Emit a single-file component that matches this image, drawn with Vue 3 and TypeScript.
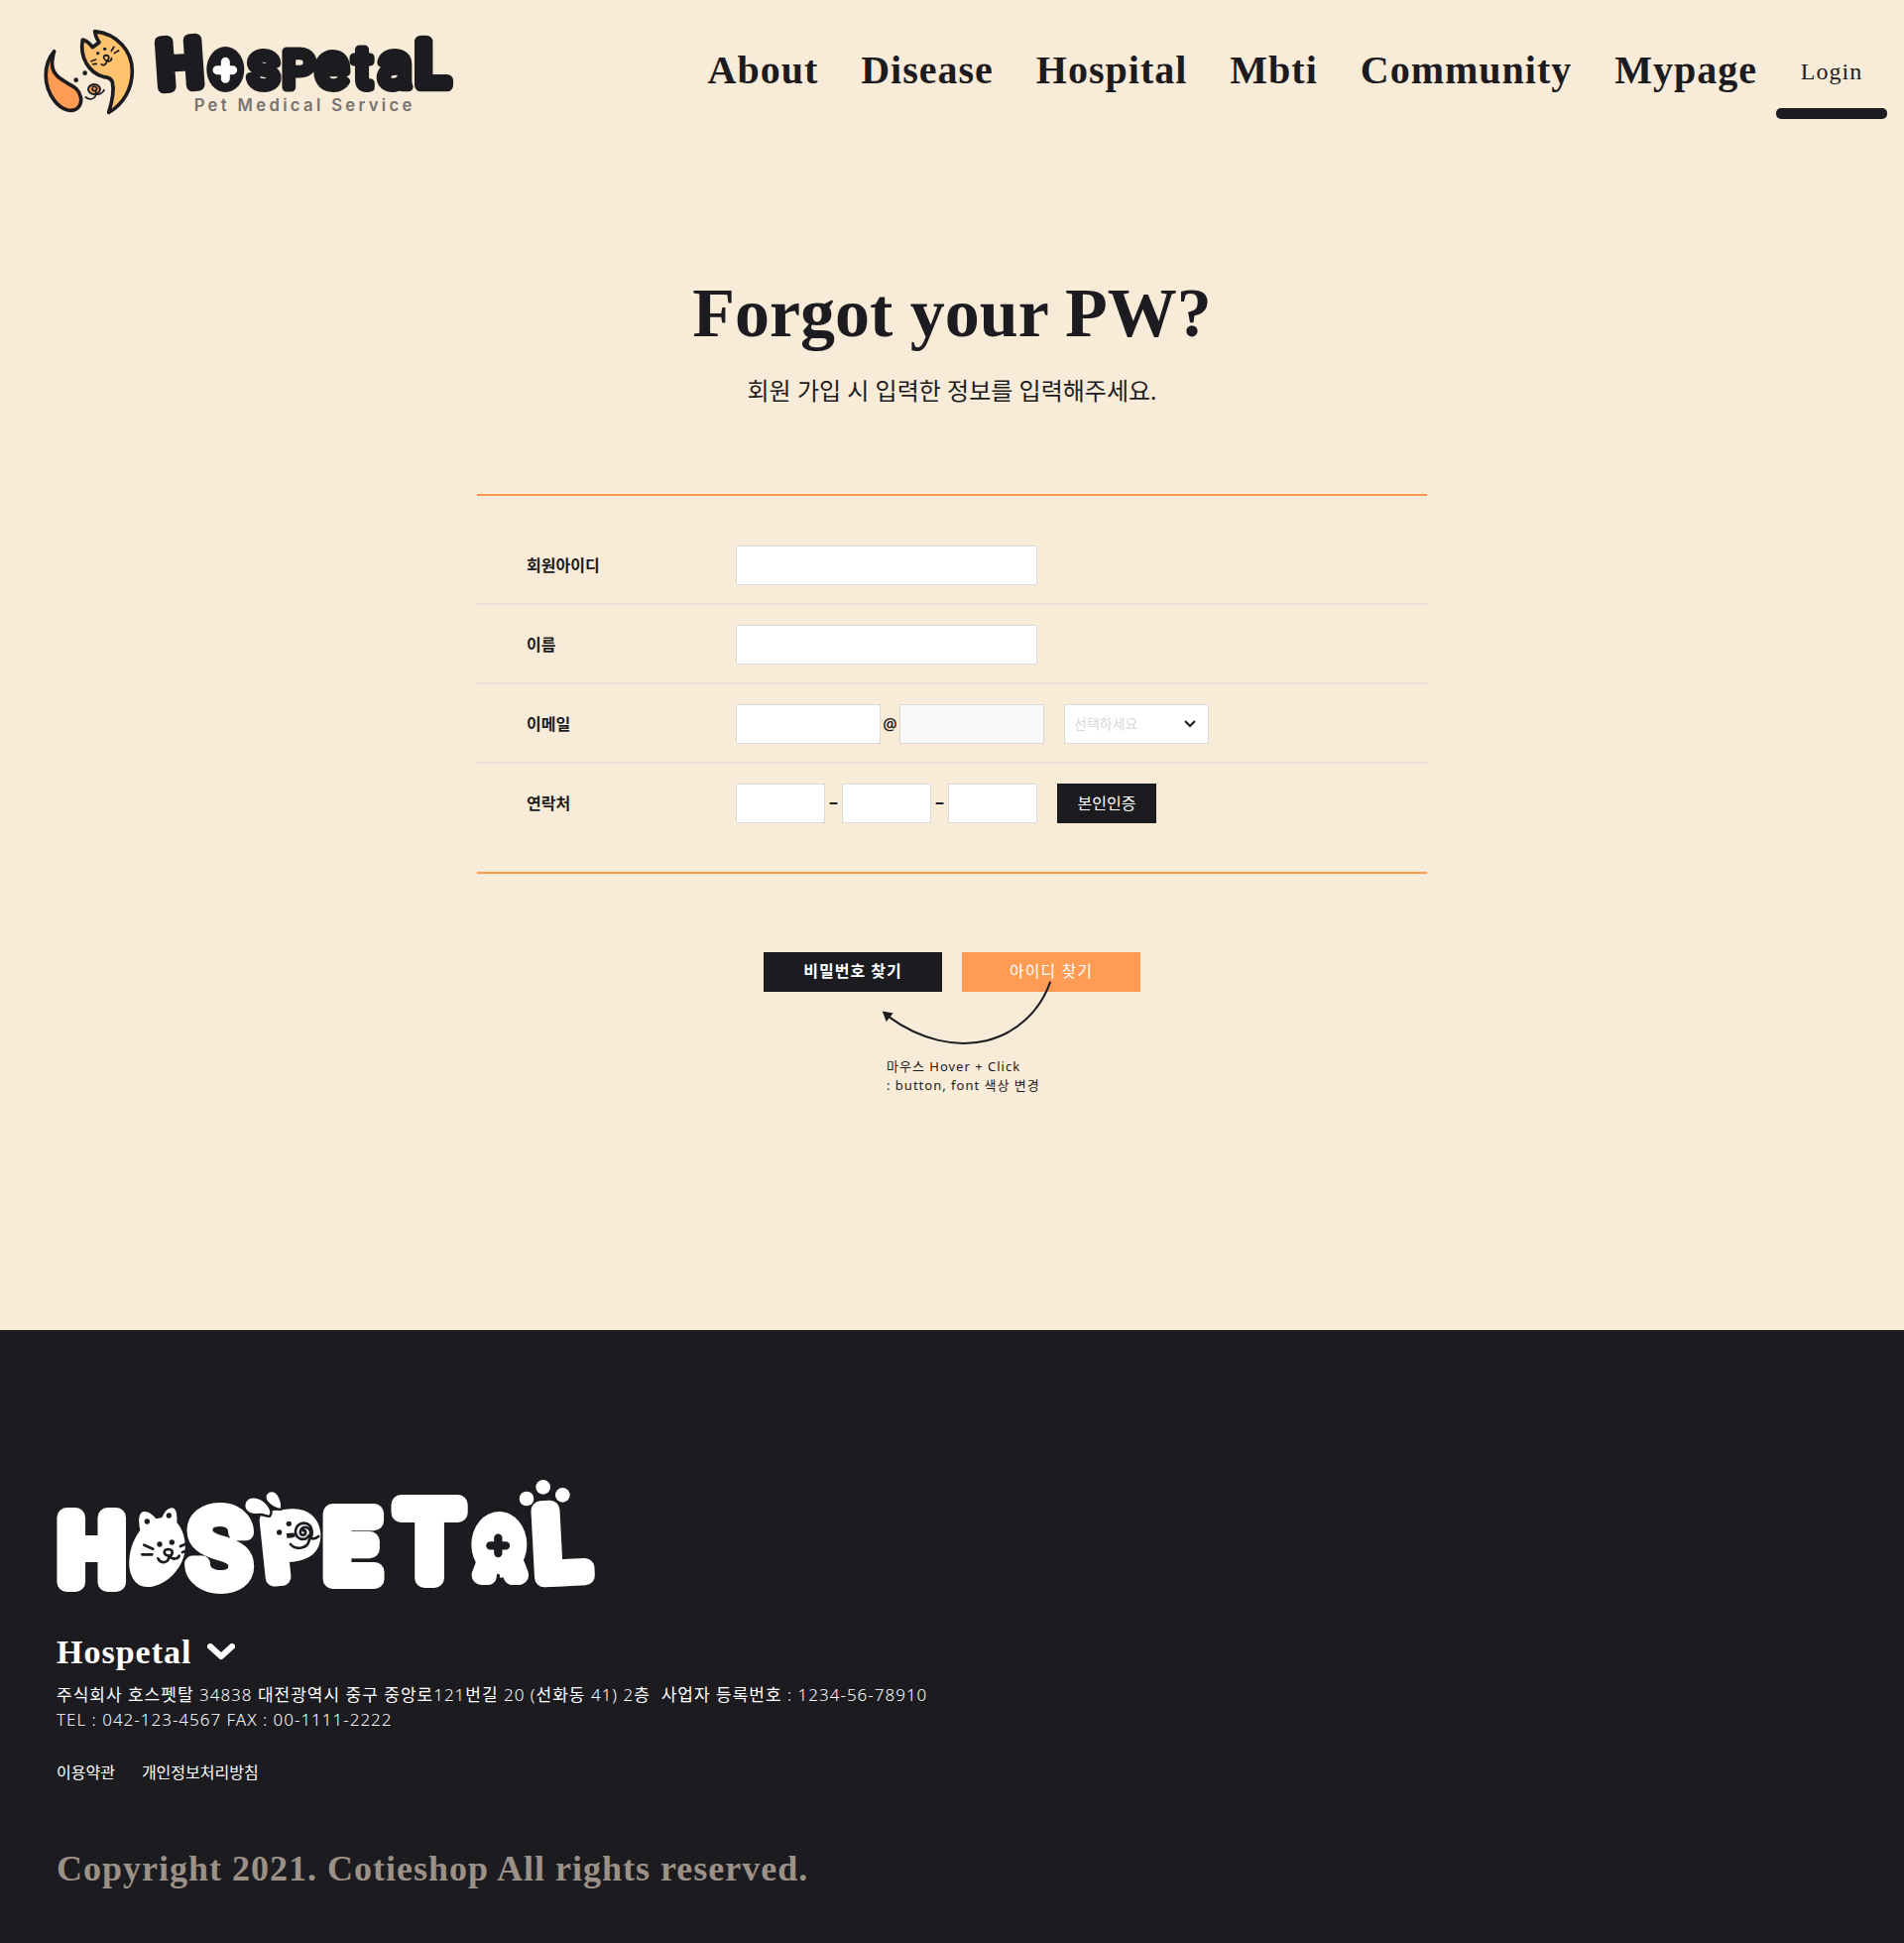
<script setup lang="ts">
import { reactive, ref } from 'vue'

interface NavItem {
  label: string
  href: string
}

const navItems: NavItem[] = [
  { label: 'About', href: '#about' },
  { label: 'Disease', href: '#disease' },
  { label: 'Hospital', href: '#hospital' },
  { label: 'Mbti', href: '#mbti' },
  { label: 'Community', href: '#community' },
  { label: 'Mypage', href: '#mypage' },
]

const form = reactive({
  memberId: '',
  name: '',
  emailUser: '',
  emailDomain: '',
  phone: ['', '', ''],
})

const provider = ref('')
const providers: string[] = ['naver.com', 'gmail.com', 'daum.net']

function pickProvider(): void {
  form.emailDomain = provider.value
}
</script>

<template>
  <div class="page">
    <header class="header">
      <a class="brand" href="#home" aria-label="Hospetal Pet Medical Service">
        <svg class="brand-logo" viewBox="0 0 416 90" aria-hidden="true">
          <!-- cat and dog emblem -->
          <g transform="translate(-10 -8) scale(0.3333)" fill="none" stroke="#1c1b20" stroke-linecap="round" stroke-linejoin="round">
            <path d="M197 35C265 42 310 95 310 155C310 208 283 256 239 280C250 245 255 210 250 188C245 173 232 174 222 172C180 160 150 115 160 60Q176 64 190 83L210 68Q199 53 197 35Z" fill="#ffc370" stroke-width="11" />
            <path d="M74 95C40 135 40 200 75 245C95 272 130 285 149 262C161 244 154 222 140 208C118 188 62 178 68 125Q70 106 74 95Z" fill="#ff9b52" stroke-width="11" />
            <path d="M247 94L255 82M256 101L269 93M186 125L200 120M191 134L202 133" stroke-width="5" />
            <path d="M232 124C222 119 221 108 231 107C242 107 242 120 232 124C233 136 222 140 217 134M232 124C238 128 250 124 247 116" stroke-width="5" />
            <circle cx="206" cy="101" r="5" fill="#1c1b20" stroke="none" />
            <circle cx="227" cy="88" r="5" fill="#1c1b20" stroke="none" />
            <circle cx="167" cy="161" r="7" fill="#1c1b20" stroke="none" />
            <circle cx="140" cy="182" r="7" fill="#1c1b20" stroke="none" />
            <ellipse cx="195" cy="210" rx="18" ry="15" fill="#ff9b52" stroke-width="6" />
            <path d="M190 203C196 199 208 206 201 213C195 218 186 212 190 207M198 224C208 228 222 222 225 212M200 216C204 237 184 246 169 234" stroke-width="5" />
          </g>
          <!-- wordmark -->
          <g transform="translate(100 -8) scale(0.3333)">
            <g class="wordmark">
              <text class="wordmark-tall" x="60" y="205" font-size="192" rotate="-4">H</text>
              <text x="226" y="186" font-size="130">o</text>
              <text x="328" y="203" font-size="192">s</text>
              <text x="434" y="203" font-size="152">P</text>
              <text x="534" y="203" font-size="188">e</text>
              <text x="650" y="203" font-size="170">t</text>
              <text x="722" y="203" font-size="192">a</text>
              <text class="wordmark-tall" x="838" y="198" font-size="184">L</text>
            </g>
            <ellipse cx="262" cy="150" rx="57" ry="69" fill="#1c1b20" />
            <path d="M262 127V178M237 152H284" fill="none" stroke="#fff" stroke-width="27" stroke-linecap="round" />
            <text class="tagline" x="167" y="277" font-size="50">Pet Medical Service</text>
          </g>
        </svg>
      </a>
      <nav class="nav" aria-label="Main">
        <a v-for="item in navItems" :key="item.href" class="nav-link" :href="item.href">{{ item.label }}</a>
        <a class="login" href="#login">Login</a>
      </nav>
    </header>

    <main class="main">
      <h1 class="title">Forgot your PW?</h1>
      <p class="subtitle">회원 가입 시 입력한 정보를 입력해주세요.</p>

      <form id="find-form" class="form" @submit.prevent>
        <div class="row">
          <label class="label" for="member-id">회원아이디</label>
          <input id="member-id" v-model="form.memberId" class="field field-long" type="text" />
        </div>
        <div class="row">
          <label class="label" for="member-name">이름</label>
          <input id="member-name" v-model="form.name" class="field field-long" type="text" />
        </div>
        <div class="row">
          <label class="label" for="email-user">이메일</label>
          <input id="email-user" v-model="form.emailUser" class="field field-mid" type="text" />
          <span class="at">@</span>
          <input v-model="form.emailDomain" class="field field-mid field-muted" type="text" aria-label="이메일 도메인" />
          <span class="select-box">
            <select v-model="provider" class="field field-mid select" aria-label="이메일 도메인 선택" @change="pickProvider">
              <option value="">선택하세요</option>
              <option v-for="p in providers" :key="p" :value="p">{{ p }}</option>
            </select>
            <svg class="select-arrow" viewBox="0 0 12 8" aria-hidden="true">
              <path d="M1 1L6 6L11 1" fill="none" stroke="#1c1b20" stroke-width="2" />
            </svg>
          </span>
        </div>
        <div class="row">
          <label class="label" for="phone-1">연락처</label>
          <input id="phone-1" v-model="form.phone[0]" class="field field-short" type="tel" />
          <span class="dash">–</span>
          <input v-model="form.phone[1]" class="field field-short" type="tel" aria-label="연락처 가운데 자리" />
          <span class="dash">–</span>
          <input v-model="form.phone[2]" class="field field-short" type="tel" aria-label="연락처 끝자리" />
          <button class="verify" type="button">본인인증</button>
        </div>
      </form>

      <div class="actions">
        <div class="buttons">
          <button class="find find-pw" type="submit" form="find-form">비밀번호 찾기</button>
          <button class="find find-id" type="button">아이디 찾기</button>
        </div>
        <svg class="arrow" viewBox="410 140 525 205" aria-hidden="true">
          <path d="M928 148C862 335 640 405 432 252" fill="none" stroke="#1c1b20" stroke-width="6" />
          <path d="M417 238L450 244L429 270Z" fill="#1c1b20" />
        </svg>
        <p class="hint">마우스 Hover + Click<br />: button, font 색상 변경</p>
      </div>
    </main>

    <footer class="footer">
      <svg class="footer-logo" viewBox="51 30 1635 360" role="img" aria-label="Hospetal">
        <g class="bubble">
          <text x="60" y="344" font-size="272">H</text>
          <text class="bubble-s" x="450" y="353" font-size="314">S</text>
          <text class="bubble-p" x="690" y="334" font-size="246" rotate="-6">P</text>
          <text x="864" y="337" font-size="278">E</text>
          <text x="1086" y="334" font-size="312">T</text>
          <text x="1334" y="324" font-size="180">A</text>
          <text x="1504" y="332" font-size="284" rotate="-3">L</text>
        </g>
        <!-- cat -->
        <path d="M304 188C297 160 300 132 316 132C332 132 342 142 352 154L370 150C378 132 388 120 402 121C415 124 416 145 415 165C436 190 445 225 438 260C425 315 375 360 325 360C290 360 268 325 271 280C273 240 288 210 304 188Z" fill="#fff" />
        <g fill="#1c1b20">
          <circle cx="325" cy="162" r="8" />
          <circle cx="391" cy="144" r="8" />
          <circle cx="363" cy="231" r="8" />
          <circle cx="400" cy="225" r="8" />
          <circle cx="725" cy="195" r="8" />
          <circle cx="754" cy="169" r="8" />
        </g>
        <g fill="none" stroke="#1c1b20" stroke-width="8" stroke-linecap="round">
          <path d="M316 233L343 245M310 262H340M426 237L440 231M432 255L440 252" />
          <path d="M391 266C374 265 372 246 389 246C407 247 403 265 391 266C392 288 366 292 358 274M391 266C402 279 419 276 422 266" />
          <path d="M759 231C775 250 812 244 815 219M815 219C828 203 829 170 800 167C770 170 765 204 790 215C815 220 832 190 808 180C785 178 783 205 798 203C808 200 806 187 798 190M812 207C826 220 838 212 844 207" />
        </g>
        <!-- dog ears -->
        <g fill="#fff" stroke="#1c1b20" stroke-width="14" paint-order="stroke">
          <path d="M624 105C632 86 660 90 676 102C692 116 702 132 694 143C684 142 674 136 660 138C632 140 617 124 624 105Z" />
          <path d="M686 85C692 68 712 70 721 86C729 100 731 115 728 122C718 124 682 104 686 85Z" />
        </g>
        <!-- paw pads and cross -->
        <g fill="#fff">
          <circle cx="1473" cy="93" r="22" />
          <circle cx="1523" cy="58" r="22" />
          <circle cx="1582" cy="82" r="22" />
          <ellipse cx="1390" cy="232" rx="84" ry="100" />
        </g>
        <path d="M1387 212V258M1363 235H1410" fill="none" stroke="#1c1b20" stroke-width="25" stroke-linecap="round" />
        <path d="M1378 372L1383 322Q1387 318 1391 322L1398 372Z" fill="#1c1b20" />
      </svg>

      <button class="family" type="button">
        Hospetal
        <svg class="family-arrow" viewBox="0 0 28 18" aria-hidden="true">
          <path d="M3 3L14 13L25 3" fill="none" stroke="#fff" stroke-width="6" stroke-linecap="round" stroke-linejoin="round" />
        </svg>
      </button>
      <address class="address">
        주식회사 호스펫탈 <span class="thin">34838</span> 대전광역시 중구 중앙로<span class="thin">121</span>번길 <span class="thin">20 (</span>선화동 <span class="thin">41) 2</span>층&nbsp; 사업자 등록번호 <span class="thin">: 1234-56-78910</span><br />
        <span class="thin">TEL : 042-123-4567 FAX : 00-1111-2222</span>
      </address>
      <div class="policies">
        <a href="#terms">이용약관</a>
        <a href="#privacy">개인정보처리방침</a>
      </div>
      <p class="copyright">Copyright 2021. Cotieshop All rights reserved.</p>
    </footer>
  </div>
</template>

<style>
body {
  background: #f8ebd8;
}
</style>

<style scoped>
.page {
  color: #1c1b20;
  font-family: 'Noto Sans', 'Noto Sans CJK KR', sans-serif;
}

a {
  color: inherit;
  text-decoration: none;
}

button,
input,
select {
  box-sizing: border-box;
  margin: 0;
  border-radius: 0;
  color: inherit;
  font-family: inherit;
}

button {
  padding: 0;
  border: 0;
  cursor: pointer;
}

.header {
  display: flex;
  justify-content: space-between;
  align-items: flex-start;
  padding: 28px 17px 0 40px;
}

.brand-logo {
  display: block;
  width: 416px;
  height: 90px;
  overflow: visible;
}

.wordmark {
  fill: #1c1b20;
  stroke: #1c1b20;
  stroke-width: 27px;
  stroke-linejoin: round;
  stroke-linecap: round;
  font-family: Roboto, sans-serif;
  font-weight: 400;
}

.wordmark-tall {
  stroke-width: 38px;
}

.tagline {
  fill: #77736f;
  font-family: Inter, sans-serif;
  font-weight: 600;
  letter-spacing: 10px;
}

.nav {
  display: flex;
  align-items: flex-start;
  gap: 43px;
  padding-top: 21px;
  font-family: 'Liberation Serif', serif;
}

.nav-link {
  font-size: 40px;
  font-weight: 700;
  line-height: 44px;
  letter-spacing: 1px;
}

.login {
  display: flex;
  flex-direction: column;
  gap: 23px;
  width: 112px;
  margin: 9px 0 0 -24px;
  font-size: 24px;
  line-height: 28px;
  letter-spacing: 1px;
  text-align: center;
}

.login::after {
  content: '';
  height: 11px;
  border-radius: 5px;
  background: #1c1b20;
}

.main {
  display: flex;
  flex-direction: column;
  align-items: center;
  padding: 156px 20px 237px;
}

.title {
  margin: 0;
  font-family: 'Liberation Serif', serif;
  font-size: 70px;
  line-height: 80px;
}

.subtitle {
  margin: 20px 0 86px;
  font-size: 24px;
  line-height: 36px;
}

.form {
  width: 100%;
  max-width: 958px;
  border-top: 2px solid #ff9b52;
  border-bottom: 2px solid #ff9b52;
}

.row {
  display: flex;
  align-items: center;
  padding: 20px 0 18px 50px;
  border-bottom: 2px solid #e9e1d8;
}

.row:first-child {
  padding-top: 50px;
}

.row:last-child {
  padding-bottom: 49px;
  border-bottom: 0;
}

.label {
  width: 211px;
  font-size: 16px;
  font-weight: 700;
  line-height: 24px;
}

.field {
  height: 40px;
  padding: 0 10px;
  border: 1px solid #d9d9d9;
  background: #fff;
  font-size: 14px;
}

.field-long {
  width: 304px;
}

.field-mid {
  width: 146px;
}

.field-short {
  width: 90px;
}

.field-muted {
  background: #f9f9f9;
}

.at {
  width: 19px;
  font-size: 16px;
  font-weight: 600;
  text-align: center;
}

.dash {
  width: 17px;
  padding-bottom: 4px;
  font-size: 18px;
  font-weight: 700;
  line-height: 24px;
  text-align: center;
}

.select-box {
  position: relative;
  display: flex;
  margin-left: 20px;
}

.select {
  padding: 0 9px 2px;
  appearance: none;
  color: #d9d9d9;
}

.select-arrow {
  position: absolute;
  top: 16px;
  right: 13px;
  width: 12px;
  height: 8px;
  pointer-events: none;
}

.verify {
  width: 100px;
  height: 40px;
  margin-left: 20px;
  padding-bottom: 2px;
  background: #1c1b20;
  color: #fff;
  font-size: 16px;
}

.actions {
  position: relative;
  margin-top: 79px;
}

.buttons {
  display: flex;
  gap: 20px;
}

.find {
  width: 180px;
  height: 40px;
  padding-bottom: 4px;
  color: #fff;
  font-size: 16px;
  letter-spacing: 1px;
}

.find-pw {
  background: #1c1b20;
  font-weight: 700;
}

.find-id {
  background: #ff9b52;
}

.arrow {
  position: absolute;
  top: 27px;
  left: 117px;
  width: 175px;
  height: 68px;
  pointer-events: none;
}

.hint {
  margin: 66px 0 0 124px;
  font-size: 13px;
  line-height: 19px;
  letter-spacing: 1px;
}

.footer {
  display: flex;
  flex-direction: column;
  align-items: flex-start;
  padding: 149px 57px 55px;
  background: #1c1b20;
  color: #fff;
}

.footer-logo {
  width: 545px;
  height: 120px;
  overflow: visible;
}

.bubble {
  fill: #fff;
  stroke: #fff;
  stroke-width: 60px;
  stroke-linejoin: round;
  stroke-linecap: round;
  font-family: Roboto, sans-serif;
  font-weight: 400;
}

.bubble-s {
  stroke-width: 48px;
}

.bubble-p {
  stroke-width: 54px;
}

.family {
  display: flex;
  align-items: center;
  gap: 16px;
  margin-top: 36px;
  background: none;
  font-family: 'Liberation Serif', serif;
  font-size: 34px;
  font-weight: 700;
  line-height: 40px;
  letter-spacing: 1px;
}

.family-arrow {
  width: 28px;
  height: 18px;
}

.address {
  margin-top: 10px;
  font-size: 17px;
  font-style: normal;
  line-height: 25px;
  letter-spacing: 1px;
}

.thin {
  font-weight: 300;
}

.policies {
  display: flex;
  gap: 27px;
  margin-top: 29px;
  font-size: 16px;
  line-height: 24px;
}

.copyright {
  margin: 65px 0 0;
  color: #9b9186;
  font-family: 'Liberation Serif', serif;
  font-size: 36px;
  font-weight: 700;
  line-height: 40px;
  letter-spacing: 1px;
}
</style>
